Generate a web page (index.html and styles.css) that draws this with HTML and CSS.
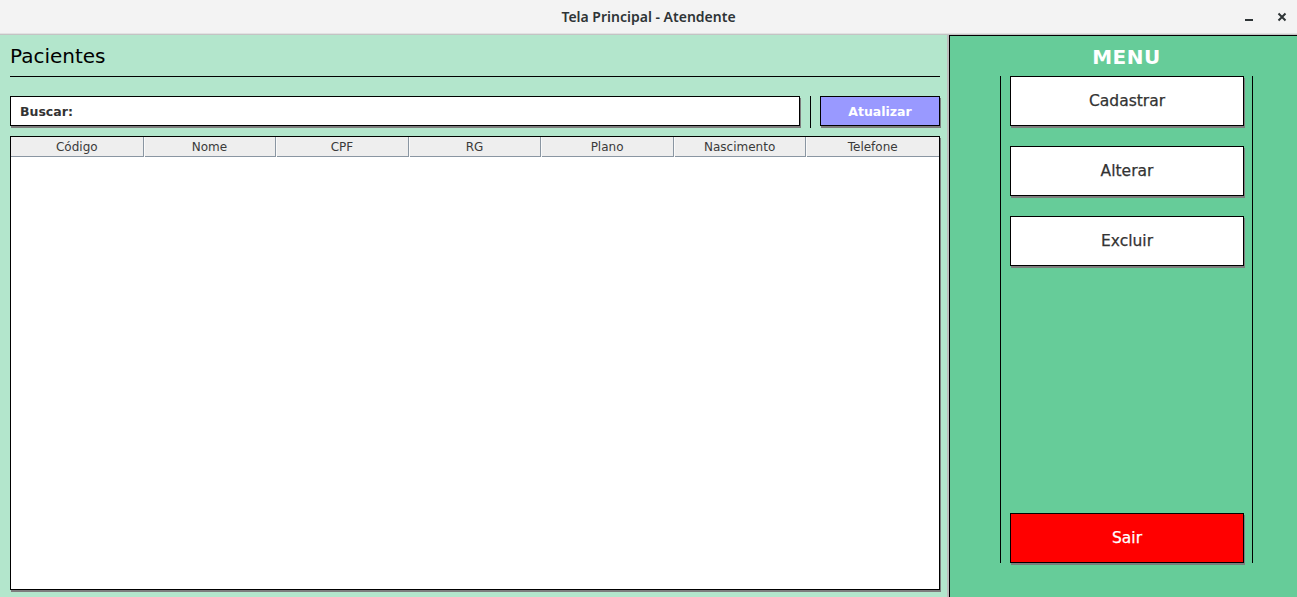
FILE: index.html
```html
<!DOCTYPE html>
<html lang="pt">
<head>
<meta charset="utf-8">
<title>Tela Principal - Atendente</title>
<link rel="stylesheet" href="styles.css">
</head>
<body>
<div class="window">
  <header class="titlebar">
    <span class="title">Tela Principal - Atendente</span>
    <div class="controls">
      <svg class="ctl" width="10" height="10" viewBox="0 0 10 10"><rect x="1" y="7" width="8" height="2" fill="#2e3436"/></svg>
      <svg class="ctl" width="10" height="10" viewBox="0 0 10 10"><path d="M1.5 1.5 L8.5 8.5 M8.5 1.5 L1.5 8.5" stroke="#2e3436" stroke-width="2"/></svg>
    </div>
  </header>
  <main class="main">
    <section class="left">
      <h1 class="heading">Pacientes</h1>
      <div class="search-row">
        <div class="search-field"><span class="search-label">Buscar:</span></div>
        <div class="vsep"></div>
        <button class="btn-refresh">Atualizar</button>
      </div>
      <div class="table">
        <div class="thead">
          <div class="th">Código</div>
          <div class="th">Nome</div>
          <div class="th">CPF</div>
          <div class="th">RG</div>
          <div class="th">Plano</div>
          <div class="th">Nascimento</div>
          <div class="th last">Telefone</div>
        </div>
        <div class="tbody"></div>
      </div>
    </section>
    <div class="splitter"></div>
    <aside class="right">
      <div class="menu-col">
        <div class="menu-title">MENU</div>
        <div class="menu-box">
          <button class="mbtn">Cadastrar</button>
          <button class="mbtn">Alterar</button>
          <button class="mbtn">Excluir</button>
          <button class="mbtn exit">Sair</button>
        </div>
      </div>
    </aside>
  </main>
</div>
</body>
</html>
```

FILE: styles.css
```css
* { box-sizing: border-box; }
html, body { margin: 0; padding: 0; }
body {
  width: 1297px;
  height: 597px;
  overflow: hidden;
  font-family: "DejaVu Sans", "Noto Sans", sans-serif;
  background: #b3e6cc;
}
.window { display: flex; flex-direction: column; height: 597px; }

.titlebar {
  height: 35px;
  flex: none;
  background: #f3f3f3;
  border-bottom: 1px solid #c4c4c4;
  box-shadow: inset 0 -1px 0 #e2e2e2;
  display: flex;
  align-items: center;
  justify-content: center;
  position: relative;
}
.title {
  font-family: "Noto Sans", "DejaVu Sans", sans-serif;
  font-weight: 600;
  font-size: 14px;
  color: #2e3436;
  margin-top: -1px;
}
.controls {
  position: absolute;
  right: 10px;
  top: 12px;
  display: flex;
  gap: 23px;
}
.ctl { display: block; }

.main { flex: 1; display: flex; min-height: 0; }

.left {
  width: 947px;
  flex: none;
  padding: 0 7px 0 10px;
  background: #b3e6cc;
  display: flex;
  flex-direction: column;
}
.heading {
  margin: 0;
  height: 42px;
  border-bottom: 1px solid #000;
  font-weight: normal;
  font-size: 20px;
  color: #000;
  line-height: 42px;
}
.search-row {
  margin-top: 19px;
  display: flex;
  align-items: flex-start;
  height: 32px;
}
.search-field {
  width: 790px;
  height: 30px;
  background: #fff;
  border: 1px solid #000;
  box-shadow: 1px 2px 0 #7d7d7d;
  display: flex;
  align-items: center;
  padding-left: 9px;
}
.search-label {
  font-weight: bold;
  font-size: 12.5px;
  color: #333;
}
.vsep {
  width: 1px;
  height: 32px;
  background: #000;
  margin-left: 10px;
}
.btn-refresh {
  margin-left: 9px;
  width: 120px;
  height: 30px;
  background: #9999ff;
  border: 1px solid #000;
  box-shadow: 1px 2px 0 #7d7d7d;
  color: #fff;
  font-family: "DejaVu Sans", sans-serif;
  font-weight: bold;
  font-size: 12.5px;
  padding: 0;
}

.table {
  margin-top: 8px;
  width: 930px;
  height: 454px;
  background: #fff;
  border: 1px solid #000;
  box-shadow: 1px 2px 0 #7d7d7d;
  display: flex;
  flex-direction: column;
}
.thead {
  display: grid;
  grid-template-columns: repeat(7, 1fr);
  height: 20px;
  background: #eeeeee;
  border-bottom: 1px solid #8a96a2;
}
.th {
  font-size: 12px;
  color: #3a3a3a;
  text-align: center;
  line-height: 20px;
  border-right: 1px solid #8a96a2;
  box-shadow: 1px 0 0 #fafafa;
}
.th.last { border-right: none; box-shadow: none; }
.tbody { flex: 1; }

.splitter {
  width: 2px;
  flex: none;
  background: #bdbdbd;
}
.right {
  flex: 1;
  background: #66cc99;
  border-left: 1px solid #000;
  border-top: 1px solid #000;
  padding-left: 50px;
}
.menu-col { width: 253px; display: flex; flex-direction: column; }
.menu-title {
  height: 40px;
  text-align: center;
  color: #fff;
  font-weight: bold;
  font-size: 20px;
  line-height: 42px;
  letter-spacing: 0.5px;
}
.menu-box {
  height: 487px;
  border-left: 1px solid #000;
  border-right: 1px solid #000;
  padding: 0 8px 0 9px;
  display: flex;
  flex-direction: column;
  gap: 20px;
}
.mbtn {
  height: 50px;
  width: 234px;
  flex: none;
  background: #fff;
  border: 1px solid #000;
  box-shadow: 1px 2px 0 #7d7d7d;
  font-family: "DejaVu Sans", sans-serif;
  font-weight: normal;
  font-size: 15.5px;
  color: #333;
  padding: 0;
  -webkit-text-stroke: 0.25px #333;
}
.mbtn.exit {
  margin-top: auto;
  background: #ff0000;
  color: #fff;
  -webkit-text-stroke: 0.25px #fff;
}
```
